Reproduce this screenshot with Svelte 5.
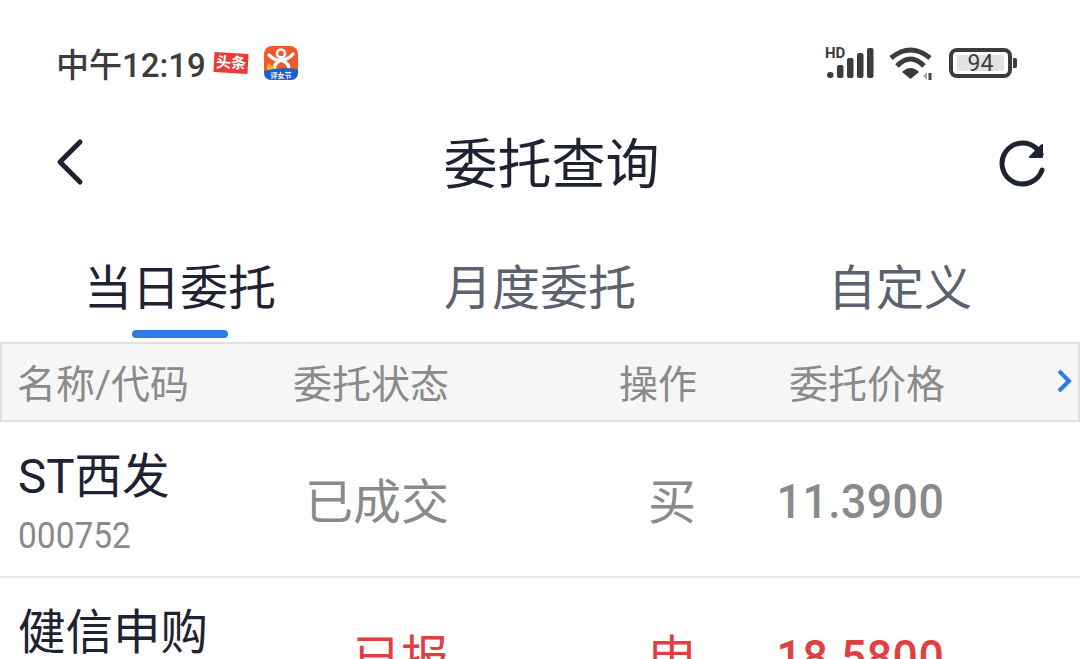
<script lang="ts">
	const rows = [
		{ name: 'ST西发', code: '000752', status: '已成交', op: '买', price: '11.3900', up: false },
		{ name: '健信申购', code: '', status: '已报', op: '申', price: '18.5800', up: true }
	];
</script>

<div class="page">
	<div class="status-bar">
		<div class="left">
			<span class="time">中午12:19</span>
			<span class="toutiao"><span>头条</span></span>
			<span class="app-icon">
				<svg viewBox="0 0 34 34" width="34" height="34">
					<rect width="34" height="34" rx="8" fill="#f2592a" />
					<circle cx="17" cy="7.5" r="4" fill="none" stroke="#fff" stroke-width="2.6" />
					<path d="M5 9 Q11 15 17 14 Q24 14 29 8" fill="none" stroke="#fff" stroke-width="3.2" stroke-linecap="round" />
					<path d="M17 14 Q9 18 11 23 M17 14 Q27 18 24 24" fill="none" stroke="#fff" stroke-width="3.2" stroke-linecap="round" />
					<path d="M3 20 l2 -3 l2 3 l3 0 l-2 4 h-5 z" fill="#f7b733" />
					<path d="M0 25 Q17 20 34 23 V26 Q34 34 26 34 H8 Q0 34 0 26 Z" fill="#1f5fd0" />
					<text x="17" y="32" text-anchor="middle" class="icon-label">评女节</text>
				</svg>
			</span>
		</div>
		<div class="right">
			<svg viewBox="0 0 50 34" width="50" height="34" class="signal">
				<text x="0" y="12" class="hd">HD</text>
				<rect x="2" y="26" width="6.5" height="6" rx="3" />
				<rect x="12" y="19" width="6.5" height="13" rx="2" />
				<rect x="22" y="12" width="6.5" height="20" rx="2" />
				<rect x="32" y="7" width="6.5" height="25" rx="2" />
				<rect x="42" y="2" width="6.5" height="30" rx="2" />
			</svg>
			<svg viewBox="0 0 48 36" width="48" height="36" class="wifi">
				<path d="M3 13 Q22.5 -3 42 13" />
				<path d="M9 21 Q22.5 7 36 21" />
				<path d="M14 27 Q22.5 19 31 27 L22.5 34 Z" class="dot" />
				<path d="M39 27 v8 l-4 -4 z" class="arrow-a" />
				<path d="M42 28 v7" class="arrow-b" />
			</svg>
			<span class="battery"><span class="level"><span>94</span></span></span>
			<span class="battery-tip"></span>
		</div>
	</div>

	<header class="nav">
		<svg viewBox="0 0 30 50" width="30" height="50" class="back">
			<path d="M25 4 L5 24 L25 44" />
		</svg>
		<h1>委托查询</h1>
		<svg viewBox="0 0 50 50" width="50" height="50" class="refresh">
			<path d="M44 33 A20.5 20.5 0 1 1 38 11 L43 17" />
			<path d="M44 8 V20 H32 Z" class="tip" />
		</svg>
	</header>

	<nav class="tabs">
		<div class="tab active">当日委托<span class="underline"></span></div>
		<div class="tab">月度委托</div>
		<div class="tab">自定义</div>
	</nav>

	<div class="thead grid">
		<span class="first">名称/代码</span>
		<span>委托状态</span>
		<span>操作</span>
		<span>委托价格</span>
		<svg viewBox="0 0 16 24" width="16" height="24" class="more"><path d="M3 2 L13 12 L3 22" /></svg>
	</div>

	{#each rows as row}
		<div class="row grid" class:up={row.up}>
			<div class="first name-cell">
				<div class="name">{row.name}</div>
				<div class="code"><span class="narrow">{row.code}</span></div>
			</div>
			<span class="cell">{row.status}</span>
			<span class="cell">{row.op}</span>
			<span class="cell"><span class="price narrow">{row.price}</span></span>
		</div>
	{/each}
</div>

<style>
	:global(body) {
		margin: 0;
		background: #fff;
	}

	.page {
		width: 1080px;
		height: 659px;
		overflow: hidden;
		background: #fff;
		font-family: Roboto, 'Noto Sans CJK SC', sans-serif;
		color: #1f2233;
	}

	.status-bar {
		height: 108px;
		box-sizing: border-box;
		padding: 44px 63px 0 56px;
		display: flex;
		justify-content: space-between;
		align-items: flex-start;
	}

	.left,
	.right {
		display: flex;
		align-items: center;
		height: 38px;
	}

	.time {
		font-size: 33px;
		font-weight: 500;
		color: #3c3c3c;
	}

	.toutiao {
		margin-left: 8px;
		width: 34px;
		height: 20px;
		background: #ea3a3a;
		transform: rotate(3deg);
		display: flex;
		align-items: center;
		justify-content: center;
		color: #fff;
		font-size: 15px;
		font-weight: 700;
		line-height: 1;
	}

	.app-icon {
		margin-left: 16px;
		display: flex;
	}

	.icon-label {
		fill: #fff;
		font-size: 7px;
		font-weight: 700;
	}

	.signal {
		fill: #3c3c3c;
		overflow: visible;
	}

	.hd {
		font-size: 15px;
		font-weight: 700;
		font-family: Roboto, sans-serif;
	}

	.wifi {
		margin-left: 13px;
		fill: none;
		stroke: #3c3c3c;
		stroke-width: 5;
	}

	.wifi .dot {
		fill: #3c3c3c;
		stroke: none;
	}

	.wifi .arrow-a {
		fill: #aaa;
		stroke: none;
	}

	.wifi .arrow-b {
		stroke: #444;
		stroke-width: 3;
	}

	.battery {
		margin-left: 13px;
		box-sizing: border-box;
		width: 63px;
		height: 30px;
		border: 4px solid #3c3c3c;
		border-radius: 8px;
		padding: 3px 4px;
		display: flex;
	}

	.level {
		flex: 1;
		background: #e2e2e2;
		border-radius: 2px;
		display: flex;
		align-items: center;
		justify-content: center;
		font-size: 23px;
		color: #3c3c3c;
		line-height: 1;
	}

	.battery-tip {
		margin-left: 1px;
		width: 4px;
		height: 10px;
		background: #3c3c3c;
		border-radius: 0 2px 2px 0;
	}

	.nav {
		height: 110px;
		box-sizing: border-box;
		padding: 0 32px 0 55px;
		display: flex;
		align-items: center;
		justify-content: space-between;
	}

	.nav h1 {
		margin: 0 0 0 20px;
		padding-top: 6px;
		font-size: 54px;
		font-weight: 400;
		line-height: 1;
		color: #1f2233;
	}

	.back,
	.refresh {
		fill: none;
		stroke: #1f2233;
		stroke-width: 5;
		stroke-linecap: round;
		stroke-linejoin: round;
	}

	.refresh {
		margin-top: -2px;
	}

	.refresh .tip {
		fill: #1f2233;
		stroke-width: 2;
	}

	.tabs {
		height: 124px;
		display: grid;
		grid-template-columns: repeat(3, 1fr);
		align-items: start;
	}

	.tab {
		position: relative;
		text-align: center;
		padding-top: 37px;
		font-size: 48px;
		line-height: 68px;
		color: #5b616e;
	}

	.tab.active {
		color: #1f2233;
	}

	.underline {
		position: absolute;
		left: 132px;
		top: 112px;
		width: 96px;
		height: 8px;
		border-radius: 4px;
		background: #2b7be9;
	}

	.grid {
		display: grid;
		grid-template-columns: 249px 200px 247px 248px 1fr;
		align-items: center;
	}

	.grid > span {
		text-align: right;
	}

	.grid > .first {
		padding-left: 18px;
		text-align: left;
	}

	.thead {
		height: 80px;
		box-sizing: border-box;
		padding-bottom: 2px;
		background: #f6f6f6;
		border: 2px solid #e2e2e2;
		grid-template-columns: 247px 200px 248px 248px 1fr;
		font-size: 39px;
		color: #8a8a8a;
	}

	.thead .first {
		margin-left: -3px;
	}

	.more {
		justify-self: end;
		margin-right: 6px;
		fill: none;
		stroke: #2b7be9;
		stroke-width: 4;
	}

	.row {
		height: 156px;
		box-sizing: border-box;
		padding-bottom: 2px;
		border-bottom: 2px solid #e8e8e8;
		color: #8a8a8a;
		font-size: 48px;
	}

	.row.up {
		color: #e04040;
	}

	.name-cell {
		align-self: start;
		padding-top: 25px;
	}

	.name {
		font-size: 47.5px;
		line-height: 60px;
		white-space: nowrap;
		color: #1f2233;
	}

	.code {
		height: 58px;
		font-size: 36px;
		line-height: 58px;
		color: #8a8a8a;
	}

	.narrow {
		display: inline-block;
	}

	.code .narrow {
		transform: scaleX(0.93);
		transform-origin: left;
	}

	.price {
		font-size: 49px;
		font-weight: 500;
		line-height: 60px;
		padding-top: 8px;
		letter-spacing: 0.5px;
		transform: scaleX(0.91);
		transform-origin: right;
	}
</style>
